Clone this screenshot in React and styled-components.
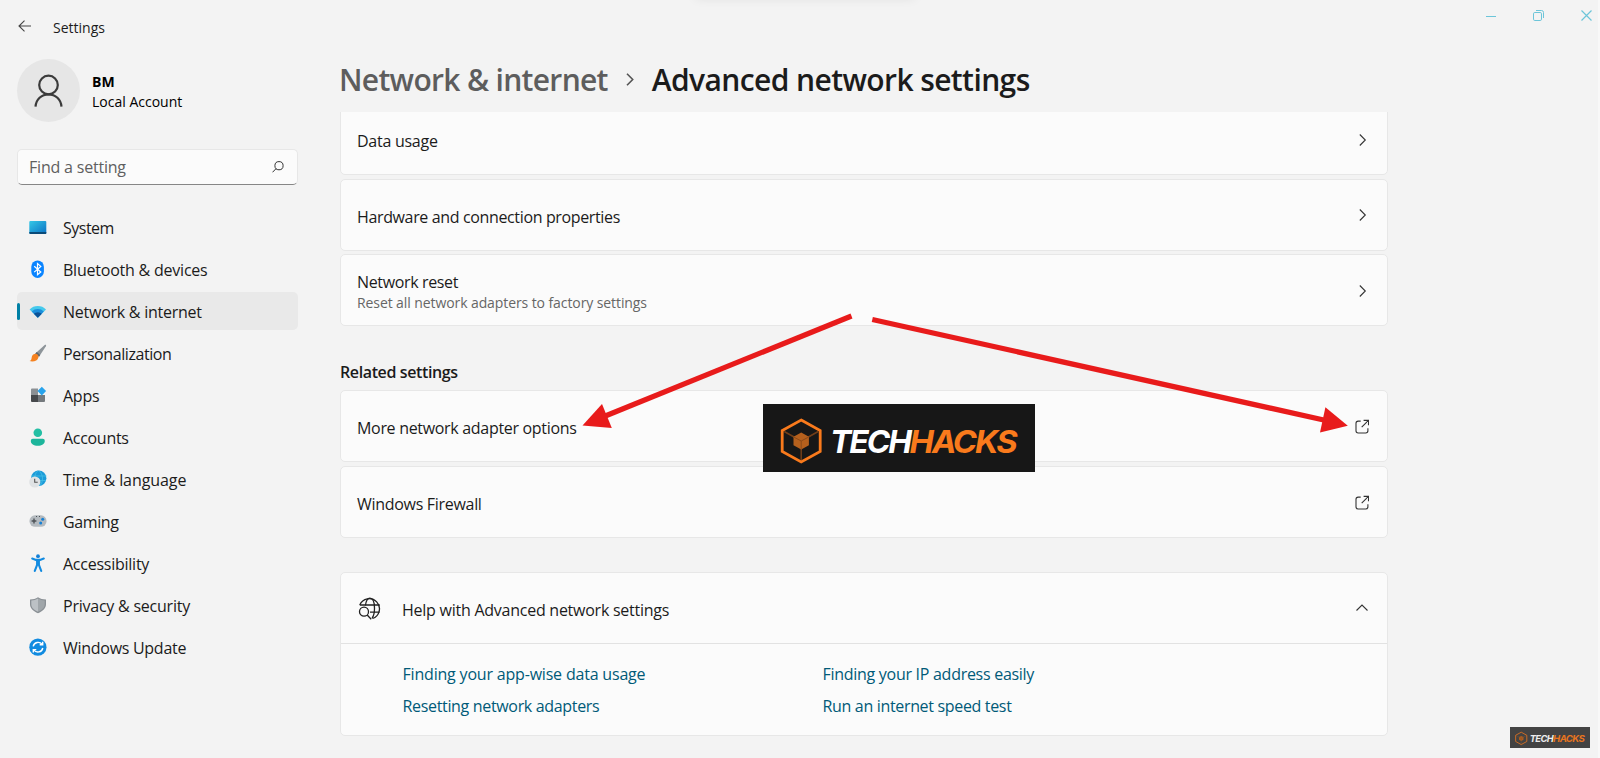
import React, { useState } from "react";
import styled, { createGlobalStyle } from "styled-components";

const relatedLinks = [
  { label: "Finding your app-wise data usage", spacing: -0.19 },
  { label: "Finding your IP address easily", spacing: -0.28 },
  { label: "Resetting network adapters", spacing: -0.33 },
  { label: "Run an internet speed test", spacing: -0.33 },
];

const navItems = [
  { label: "System", icon: <SystemIcon />, spacing: -0.5 },
  { label: "Bluetooth & devices", icon: <BluetoothIcon />, spacing: -0.22 },
  { label: "Network & internet", icon: <WifiIcon />, spacing: -0.25 },
  { label: "Personalization", icon: <BrushIcon />, spacing: -0.42 },
  { label: "Apps", icon: <AppsIcon />, spacing: -0.25 },
  { label: "Accounts", icon: <AccountsIcon />, spacing: -0.3 },
  { label: "Time & language", icon: <TimeIcon />, spacing: -0.07 },
  { label: "Gaming", icon: <GamingIcon />, spacing: -0.4 },
  { label: "Accessibility", icon: <AccessibilityIcon />, spacing: -0.25 },
  { label: "Privacy & security", icon: <ShieldIcon />, spacing: -0.23 },
  { label: "Windows Update", icon: <UpdateIcon />, spacing: -0.28 },
];

function App() {
  const [active, setActive] = useState("Network & internet");

  return (
    <>
      <GlobalStyle />
      <Window>
        <Sidebar>
          <TitleBar>
            <BackIcon />
            <AppName>Settings</AppName>
          </TitleBar>

          <Profile>
            <Avatar>
              <svg width="30" height="34" viewBox="0 0 30 34">
                <g fill="none" stroke="#3b3b3b" strokeWidth="2.2">
                  <circle cx="14.5" cy="11" r="9.3" />
                  <path d="M1.500 32.600c.6-7 5.900-12.300 13-12.300s12.400 5.300 13 12.300" />
                </g>
              </svg>
            </Avatar>
            <ProfileText>
              <b>BM</b>
              <span>Local Account</span>
            </ProfileText>
          </Profile>

          <Search>
            <Label $spacing={-0.2}>Find a setting</Label>
            <svg width="12" height="12" viewBox="0 0 12 12">
              <g fill="none" stroke="#333" strokeWidth="1">
                <circle cx="7" cy="4.700" r="4.100" />
                <path d="M4 7.700L.5 11.300" />
              </g>
            </svg>
          </Search>

          <Nav>
            {navItems.map((item) => (
              <NavItem
                key={item.label}
                $active={item.label === active}
                onClick={() => setActive(item.label)}
              >
                <NavIcon>{item.icon}</NavIcon>
                <Label $spacing={item.spacing}>{item.label}</Label>
              </NavItem>
            ))}
          </Nav>
        </Sidebar>

        <Main>
          <WindowControls>
            <svg width="10" height="10" viewBox="0 0 10 10">
              <path d="M0 5.500H10" stroke="#6cc5d9" />
            </svg>
            <svg width="11" height="11" viewBox="0 0 11 11">
              <g fill="none" stroke="#6cc5d9">
                <rect x=".5" y="2.500" width="8" height="8" rx="1.300" />
                <path d="M3 .5h5.500a2 2 0 0 1 2 2V8" />
              </g>
            </svg>
            <svg width="11" height="11" viewBox="0 0 11 11">
              <path d="M.5.5l10 10M10.500.5l-10 10" stroke="#6cc5d9" strokeWidth="1.200" />
            </svg>
          </WindowControls>

          <Breadcrumb>
            <Crumb $muted $spacing={-0.68}>
              Network &amp; internet
            </Crumb>
            <svg width="8" height="13" viewBox="0 0 8 13">
              <path d="M1 .8l5.700 5.700L1 12.200" fill="none" stroke="#555" strokeWidth="1.600" />
            </svg>
            <Crumb $spacing={-0.6}>Advanced network settings</Crumb>
          </Breadcrumb>

          <Content>
            <Cards $pull>
              <Card>
                <CardTitle $spacing={-0.26}>Data usage</CardTitle>
                <ChevronRight />
              </Card>
              <Card>
                <CardTitle $spacing={-0.36}>Hardware and connection properties</CardTitle>
                <ChevronRight />
              </Card>
              <Card>
                <CardText>
                  <CardTitle $spacing={-0.36}>Network reset</CardTitle>
                  <CardNote>Reset all network adapters to factory settings</CardNote>
                </CardText>
                <ChevronRight />
              </Card>
            </Cards>

            <SectionTitle>Related settings</SectionTitle>
            <Cards>
              <Card>
                <CardTitle $spacing={-0.31}>More network adapter options</CardTitle>
                <OpenIcon />
              </Card>
              <Card>
                <CardTitle $spacing={-0.3}>Windows Firewall</CardTitle>
                <OpenIcon />
              </Card>
            </Cards>

            <HelpCard>
              <HelpHeader>
                <GlobeSearchIcon />
                <HelpTitle $spacing={-0.25}>Help with Advanced network settings</HelpTitle>
                <svg width="14" height="8" viewBox="0 0 14 8">
                  <path d="M1.500 6.500l5.500-5.500 5.500 5.500" fill="none" stroke="#333" strokeWidth="1.100" />
                </svg>
              </HelpHeader>
              <HelpLinks>
                {relatedLinks.map((link) => (
                  <HelpLink key={link.label} $spacing={link.spacing}>
                    {link.label}
                  </HelpLink>
                ))}
              </HelpLinks>
            </HelpCard>
          </Content>
        </Main>

        <TopShade />
        <EdgeLine />

        <Arrows viewBox="0 0 1600 758">
          <g stroke="#e81b1b" strokeWidth="5.200">
            <path d="M851.500 316L604 416.500" />
            <path d="M872.300 319.500L1326 420.500" />
          </g>
          <g fill="#e81b1b">
            <path d="M582.500 425.500L602 404l9.800 24z" />
            <path d="M1347.800 425.700L1325.400 407.200l-5.400 25.400z" />
          </g>
        </Arrows>

        <LogoPlate>
          <Logo />
        </LogoPlate>
        <LogoPlate $small>
          <Logo />
        </LogoPlate>
      </Window>
    </>
  );
}

export default App;

function Logo() {
  return (
    <svg viewBox="0 0 272 68">
      <g fill="none" stroke="#f97a1c">
        <path d="M38.200 16l19 10.500v21l-19 10.500-19-10.500v-21z" strokeWidth="2.800" />
        <path
          d="M38.200 37v19M38.200 37l-17-9.500M38.200 37l17-9.500"
          strokeWidth="1.500"
          opacity=".4"
        />
      </g>
      <path d="M38.200 28.500l7.700 4.200v8.600l-7.700 4.200-7.700-4.200v-8.600z" fill="#b5601d" />
      <path d="M38.200 37v8M38.200 37l-7.500-4M38.200 37l7.500-4" stroke="#8c4a19" />
      <g
        fontFamily="Inter, 'Liberation Sans', sans-serif"
        fontSize="31.500"
        fontWeight="700"
        fontStyle="italic"
        letterSpacing="-2"
      >
        <text x="67" y="49" fill="#fff" textLength="80" lengthAdjust="spacingAndGlyphs">
          TECH
        </text>
        <text x="146.500" y="49" fill="#f97a1c" textLength="106" lengthAdjust="spacingAndGlyphs">
          HACKS
        </text>
      </g>
    </svg>
  );
}

function BackIcon() {
  return (
    <svg width="14" height="12" viewBox="0 0 14 12">
      <path d="M13 6H1M6.500.7L1 6l5.500 5.300" fill="none" stroke="#444" strokeWidth="1.100" />
    </svg>
  );
}

function ChevronRight() {
  return (
    <svg width="14" height="14" viewBox="0 0 14 14">
      <path d="M4.800 1.500l5.500 5.500-5.500 5.500" fill="none" stroke="#333" strokeWidth="1.100" />
    </svg>
  );
}

function OpenIcon() {
  return (
    <svg width="14" height="15" viewBox="0 0 14 15">
      <g fill="none" stroke="#333" strokeWidth="1.100">
        <path d="M5.700 2.100H3.200A2.200 2.200 0 0 0 1 4.300v7.500A2.200 2.200 0 0 0 3.200 14h7.500a2.200 2.200 0 0 0 2.200-2.200V9.300" />
        <path d="M8.600 1.400h4.900v4.900M13.500 1.400l-6.800 6.800" />
      </g>
    </svg>
  );
}

function GlobeSearchIcon() {
  return (
    <svg width="23" height="23" viewBox="0 0 23 23">
      <g fill="none" stroke="#222" strokeWidth="1.300">
        <path d="M1.800 8A10.200 10.200 0 1 1 14.500 21.500" />
        <path d="M1.800 8h19.900M12 15.200h9.600" />
        <path d="M7.500 8.500c.5-4.500 2-7.400 4.400-7.400 3 0 4.600 4.300 4.600 10.200 0 4-.9 7.900-2.400 9.700" />
        <circle cx="6" cy="14.700" r="4.500" />
        <path d="M9.200 18l4 4.200" />
      </g>
    </svg>
  );
}

function SystemIcon() {
  return (
    <svg width="18" height="18" viewBox="0 0 18 18">
      <defs>
        <linearGradient id="sys" x1="0" y1="0" x2="1" y2="1">
          <stop offset="0" stopColor="#35c8e6" />
          <stop offset="1" stopColor="#0a70c4" />
        </linearGradient>
      </defs>
      <rect x=".3" y="3" width="17" height="13" rx="1" fill="url(#sys)" />
      <path d="M.3 14h17v1a1 1 0 0 1-1 1h-15a1 1 0 0 1-1-1z" fill="#0a4a78" />
    </svg>
  );
}

function BluetoothIcon() {
  return (
    <svg width="18" height="18" viewBox="0 0 18 18">
      <rect x="2.300" y=".5" width="12.600" height="17.400" rx="6.300" fill="#0a84ff" />
      <path
        d="M5.200 6.300l6.600 5.700-3.300 2.800V3.600l3.300 2.800-6.600 5.700"
        fill="none"
        stroke="#fff"
        strokeWidth="1.200"
      />
    </svg>
  );
}

function WifiIcon() {
  return (
    <svg width="18" height="18" viewBox="0 0 18 18">
      <path d="M8.800 15.700L.6 7.400A11.600 11.600 0 0 1 17 7.400z" fill="#45c9ec" />
      <path d="M8.800 15.700l-6-6.100a8.500 8.500 0 0 1 12 0z" fill="#1b8ddb" />
      <path d="M8.800 15.700l-4-3.900a5.700 5.700 0 0 1 8 0z" fill="#0c5296" />
    </svg>
  );
}

function BrushIcon() {
  return (
    <svg width="18" height="18" viewBox="0 0 18 18">
      <path d="M15.700 1c1-.7 1.800.2 1.200 1.200L10 12.800 6.300 9.500z" fill="#8d9499" />
      <path d="M6.300 9.500l1.500-1.600 3.400 3.100L10 12.800z" fill="#5f676d" />
      <path
        d="M5.600 9.900c2.300-.6 4.300 1.200 3.800 3.500-.7 3.300-4.600 4.700-8.900 3.700 2.500-1 1.800-2.800 2.500-4.900.4-1.200 1.300-2 2.600-2.300z"
        fill="#f58220"
      />
    </svg>
  );
}

function AppsIcon() {
  return (
    <svg width="18" height="18" viewBox="0 0 18 18">
      <path d="M3 2.500h6V9H2V3.500a1 1 0 0 1 1-1z" fill="#8b9094" />
      <path d="M2 9h7v7H3a1 1 0 0 1-1-1z" fill="#46494c" />
      <path d="M9 9h7v6a1 1 0 0 1-1 1H9z" fill="#74797d" />
      <path d="M12.800.8l4.300 4.300-4.300 4.300-4.300-4.300z" fill="#27a3ec" />
    </svg>
  );
}

function AccountsIcon() {
  return (
    <svg width="18" height="18" viewBox="0 0 18 18">
      <circle cx="8.800" cy="4.700" r="4.300" fill="#23bfa4" />
      <path
        d="M3.800 10.800h10a2 2 0 0 1 2 2c0 3.200-3 5-7 5s-7-1.800-7-5a2 2 0 0 1 2-2z"
        fill="#1db59b"
      />
    </svg>
  );
}

function TimeIcon() {
  return (
    <svg width="18" height="18" viewBox="0 0 18 18">
      <circle cx="9.700" cy="8.200" r="7.700" fill="#1c9bd8" />
      <path
        d="M2.500 6h15M10 .6c4.500 4 4.500 11 1 15M9 .6C6 3 6 6 6 8M9 10.500h8"
        fill="none"
        stroke="#45bfe6"
        strokeWidth=".8"
      />
      <circle cx="5.800" cy="12" r="5.600" fill="#dfe2e4" />
      <path d="M5.700 8.800v3.500h3" fill="none" stroke="#555" strokeWidth="1.100" />
    </svg>
  );
}

function GamingIcon() {
  return (
    <svg width="18" height="18" viewBox="0 0 18 18">
      <rect x=".5" y="3.300" width="17" height="11.500" rx="5.500" fill="#b4babf" />
      <path d="M5 6.600v4.800M2.600 9h4.800" stroke="#4c5257" strokeWidth="1.400" />
      <path d="M7 4.500h1M10 4.500h1" stroke="#4c5257" />
      <circle cx="13.700" cy="7.300" r="1.500" fill="#1780d4" />
      <circle cx="11.700" cy="11" r="1.500" fill="#1780d4" />
    </svg>
  );
}

function AccessibilityIcon() {
  return (
    <svg width="18" height="18" viewBox="0 0 18 18">
      <circle cx="9" cy="2.200" r="1.900" fill="#1380d8" />
      <path
        d="M3.200 4.500L7 5.900h4l3.800-1.400M8.100 5.900v5l-2.300 6M9.900 5.900v5l2.300 6M8 8h2"
        fill="none"
        stroke="#138be0"
        strokeWidth="2.100"
        strokeLinecap="round"
        strokeLinejoin="round"
      />
    </svg>
  );
}

function ShieldIcon() {
  return (
    <svg width="18" height="18" viewBox="0 0 18 18">
      <path
        d="M9 1.200c2.300 1.500 4.800 2.200 8 2.200v4.800c0 4-3.200 7-8 9-4.800-2-8-5-8-9V3.400c3.200 0 5.700-.7 8-2.200z"
        fill="#8a9095"
      />
      <path d="M9 2.600c-2 1.200-4.200 1.900-6.700 2v3.600c0 3.300 2.600 5.800 6.700 7.500z" fill="#bcc1c5" />
      <path d="M9 2.600c2 1.200 4.200 1.900 6.700 2v3.600c0 3.300-2.600 5.800-6.700 7.500z" fill="#a0a6aa" />
    </svg>
  );
}

function UpdateIcon() {
  return (
    <svg width="18" height="18" viewBox="0 0 18 18">
      <circle cx="8.900" cy="9.200" r="8.600" fill="#118be0" />
      <g fill="none" stroke="#fff" strokeWidth="1.400">
        <path d="M4.200 8.400A5 5 0 0 1 13.200 6.500M13.800 10A5 5 0 0 1 4.800 11.900" />
        <path d="M13.700 3.800v3h-3M4.300 14.600v-3h3" />
      </g>
    </svg>
  );
}

const GlobalStyle = createGlobalStyle`
  body {
    margin: 0;
    background: #f3f3f3;
    font-family: "Open Sans", "Noto Sans", sans-serif;
    font-size: 16px;
    color: #1b1b1b;
    overflow: hidden;
  }

  * {
    box-sizing: border-box;
  }

  svg {
    display: block;
    flex-shrink: 0;
  }
`;

const Window = styled.div`
  position: relative;
  display: grid;
  grid-template-columns: 340px 1fr;
  width: 1600px;
  height: 758px;
  background: #f3f3f3;
  overflow: hidden;
`;

const Label = styled.span`
  letter-spacing: ${(props) => props.$spacing || 0}px;
`;

const Sidebar = styled.aside`
  display: flex;
  flex-direction: column;
  padding-left: 17px;
`;

const TitleBar = styled.div`
  display: flex;
  align-items: center;
  height: 59px;
  padding: 0 0 7px 1px;
`;

const AppName = styled.span`
  margin: 3px 0 0 21px;
  font-size: 14px;
  line-height: 20px;
`;

const Profile = styled.div`
  display: flex;
  align-items: center;
  height: 63px;
`;

const Avatar = styled.div`
  display: flex;
  align-items: center;
  justify-content: center;
  width: 63px;
  height: 63px;
  border-radius: 50%;
  background: #e6e6e6;
`;

const ProfileText = styled.div`
  display: flex;
  flex-direction: column;
  margin: 2px 0 0 12px;
  font-size: 14px;
  line-height: 20px;
  color: #000;
`;

const Search = styled.div`
  display: flex;
  align-items: center;
  justify-content: space-between;
  width: 281px;
  height: 36px;
  margin-top: 27px;
  padding: 0 13px 0 11px;
  border: 1px solid #e7e7e7;
  border-bottom: 1px solid #868686;
  border-radius: 5px;
  background: #fbfbfb;
  color: #5f5f5f;
`;

const Nav = styled.nav`
  display: flex;
  flex-direction: column;
  gap: 4px;
  margin-top: 23px;
`;

const NavItem = styled.div`
  position: relative;
  display: flex;
  align-items: center;
  width: 281px;
  height: 38px;
  padding-left: 12px;
  border-radius: 5px;
  background: ${(props) => (props.$active ? "#e9e9e9" : "transparent")};
  cursor: pointer;

  &::before {
    content: "";
    display: ${(props) => (props.$active ? "block" : "none")};
    position: absolute;
    left: 0;
    top: 11px;
    width: 3px;
    height: 17px;
    border-radius: 2px;
    background: #0080a5;
  }

  ${Label} {
    padding-top: 2px;
  }
`;

const NavIcon = styled.div`
  margin-right: 16px;
`;

const Main = styled.main`
  display: flex;
  flex-direction: column;
  min-width: 0;
`;

const WindowControls = styled.div`
  display: flex;
  justify-content: flex-end;
  align-items: center;
  gap: 37px;
  height: 32px;
  padding: 0 8px 1px 0;
`;

const Breadcrumb = styled.div`
  display: flex;
  align-items: center;
  gap: 18px;
  height: 80px;
  padding-top: 15px;
  margin-left: -1px;
`;

const Crumb = styled.h1`
  margin: 0;
  font-size: 30px;
  font-weight: 600;
  letter-spacing: ${(props) => props.$spacing}px;
  color: ${(props) => (props.$muted ? "#5d5d5d" : "#1b1b1b")};
`;

const Content = styled.div`
  width: 1048px;
  height: 646px;
  overflow: hidden;
`;

const Cards = styled.div`
  display: flex;
  flex-direction: column;
  gap: 3.600px;
  margin-top: ${(props) => (props.$pull ? "-9px" : "0")};
`;

const Card = styled.div`
  display: flex;
  align-items: center;
  justify-content: space-between;
  height: 72px;
  padding: 1px 18px 0 16px;
  border: 1px solid #e7e7e7;
  border-radius: 5px;
  background: #fbfbfb;
`;

const CardText = styled.div`
  display: flex;
  flex-direction: column;
`;

const CardTitle = styled(Label)`
  padding-top: 3px;
  line-height: 22px;

  ${CardText} & {
    padding-top: 2px;
  }
`;

const CardNote = styled.span`
  font-size: 14px;
  line-height: 20px;
  letter-spacing: -0.09px;
  color: #666;
`;

const SectionTitle = styled.h2`
  margin: 35px 0 7px;
  font-size: 16px;
  font-weight: 600;
  line-height: 22px;
  letter-spacing: -0.38px;
`;

const HelpCard = styled.div`
  height: 164px;
  margin-top: 34px;
  border: 1px solid #e7e7e7;
  border-radius: 5px;
  background: #fbfbfb;
`;

const HelpHeader = styled.div`
  display: flex;
  align-items: center;
  height: 71px;
  padding: 1px 18px 0 17px;
  border-bottom: 1px solid #e2e2e2;
`;

const HelpTitle = styled(Label)`
  flex: 1;
  margin-left: 21px;
  padding-top: 3px;
`;

const HelpLinks = styled.div`
  display: grid;
  grid-template-columns: 420px 1fr;
  row-gap: 10px;
  padding: 19px 0 0 61.500px;
  line-height: 22px;
`;

const HelpLink = styled.a`
  letter-spacing: ${(props) => props.$spacing}px;
  color: #005a78;
  cursor: pointer;
`;

const TopShade = styled.div`
  position: absolute;
  left: 695px;
  top: -11px;
  width: 220px;
  height: 8px;
  border-radius: 4px;
  box-shadow: 0 0 12px rgba(0, 0, 0, 0.12);
`;

const EdgeLine = styled.div`
  position: absolute;
  top: 0;
  right: 0;
  width: 2px;
  height: 758px;
  background: #f8f8f8;
`;

const Arrows = styled.svg`
  position: absolute;
  inset: 0;
  width: 1600px;
  height: 758px;
  pointer-events: none;
`;

const LogoPlate = styled.div`
  position: absolute;
  left: ${(props) => (props.$small ? "1510px" : "763px")};
  top: ${(props) => (props.$small ? "727px" : "404px")};
  width: ${(props) => (props.$small ? "80px" : "272px")};
  height: ${(props) => (props.$small ? "21px" : "68px")};
  background: ${(props) => (props.$small ? "#434343" : "#171717")};

  svg {
    width: 100%;
    height: 100%;
    opacity: ${(props) => (props.$small ? 0.9 : 1)};
  }
`;
